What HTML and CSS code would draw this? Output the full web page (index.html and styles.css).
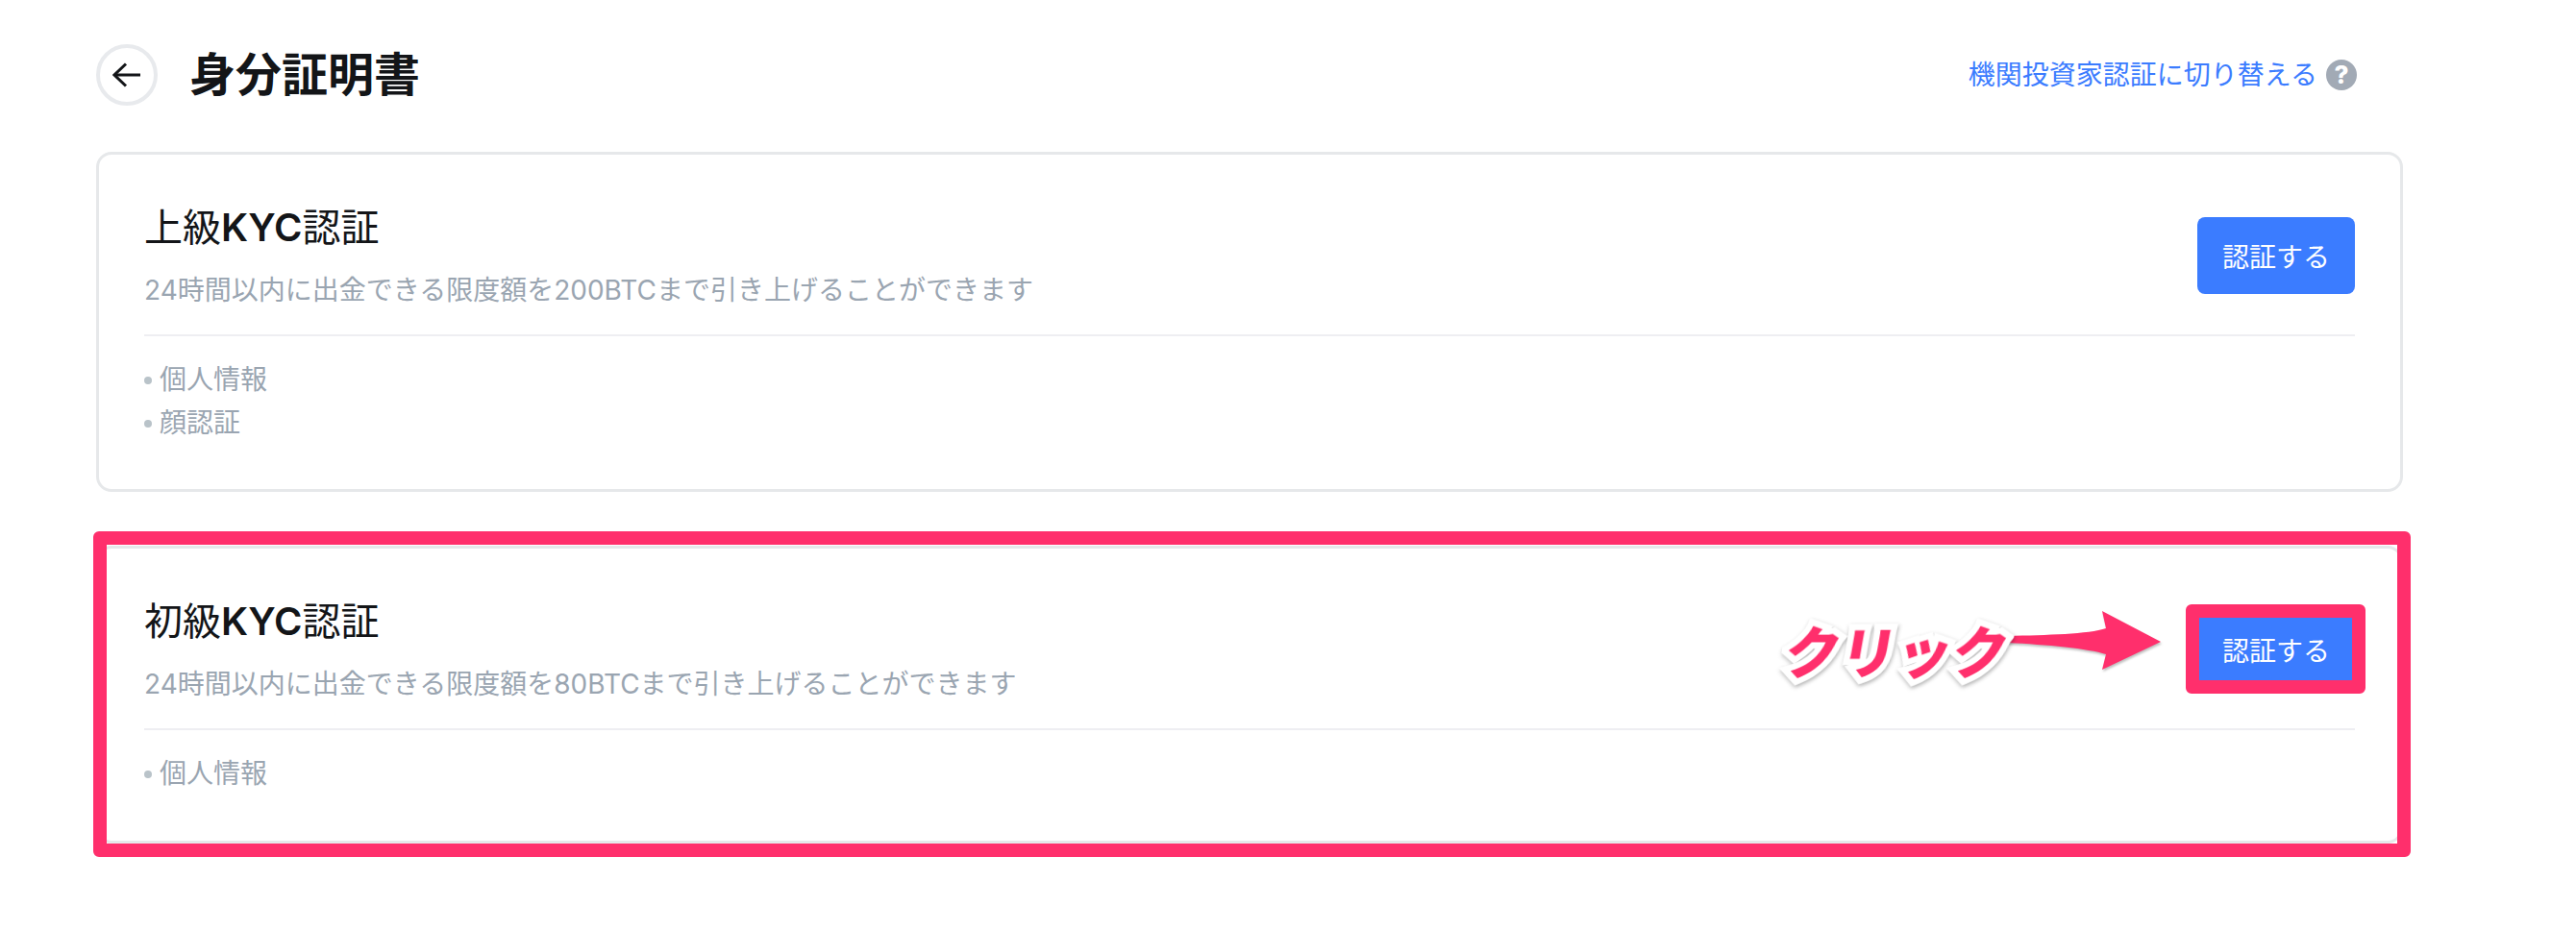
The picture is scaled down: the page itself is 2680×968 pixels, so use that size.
FILE: index.html
```html
<!DOCTYPE html>
<html lang="ja">
<head>
    <meta charset="UTF-8">
    <title>身分証明書</title>
    <link rel="stylesheet" href="styles.css">
</head>
<body>
    <div class="page">
        <header class="header">
            <div class="header-left">
                <button class="back-btn">
                    <svg width="30" height="26" viewBox="0 0 30 26" fill="none" stroke="#131518" stroke-width="3">
                        <path d="M29 13H2"/>
                        <path d="M14 1.5 2 13l12 11.5"/>
                    </svg>
                </button>
                <h1>身分証明書</h1>
            </div>
            <div class="switch">
                <a class="switch-link">機関投資家認証に切り替える</a>
                <span class="help">?</span>
            </div>
        </header>

        <section class="card">
            <div class="card-head">
                <div>
                    <h2>上級<b>KYC</b>認証</h2>
                    <p class="sub">24時間以内に出金できる限度額を200BTCまで引き上げることができます</p>
                </div>
                <button class="btn">認証する</button>
            </div>
            <ul class="req">
                <li>個人情報</li>
                <li>顔認証</li>
            </ul>
        </section>

        <section class="card">
            <div class="card-head">
                <div>
                    <h2>初級<b>KYC</b>認証</h2>
                    <p class="sub">24時間以内に出金できる限度額を80BTCまで引き上げることができます</p>
                </div>
                <button class="btn">認証する</button>
            </div>
            <ul class="req">
                <li>個人情報</li>
            </ul>
        </section>

        <!-- annotation layer -->
        <div class="mark-card"></div>
        <div class="mark-btn"></div>
        <svg class="click-arrow" width="170" height="70" viewBox="0 0 170 70">
            <path d="M0 28C40 27 84 26 102 20L98 2 159 34 98 63 102 47C84 41 40 37 0 35Z" fill="#ff2f6c"/>
        </svg>
        <div class="click-label">クリック</div>
    </div>
</body>
</html>
```

FILE: styles.css
```css
* {
    box-sizing: border-box;
}
body {
    margin: 0;
    background: #fff;
    font-family: Inter, "Noto Sans CJK JP", sans-serif;
    color: #131518;
}
.page {
    position: relative;
    width: 2680px;
    height: 968px;
    padding: 46px 180px 0 100px;
}
.header {
    display: flex;
    justify-content: space-between;
    align-items: center;
    height: 64px;
    margin-bottom: 48px;
}
.header-left {
    display: flex;
    align-items: center;
    gap: 33px;
}
.back-btn {
    display: flex;
    align-items: center;
    justify-content: center;
    width: 64px;
    height: 64px;
    padding: 0;
    background: #fff;
    border: 4px solid #e8eaed;
    border-radius: 50%;
}
h1 {
    margin: 0;
    font-size: 48px;
    font-weight: 700;
    line-height: 64px;
}
.switch {
    display: flex;
    align-items: center;
    gap: 9px;
    padding-right: 48px;
}
.switch-link {
    color: #3b7cff;
    font-size: 28px;
    line-height: 40px;
}
.help {
    width: 32px;
    height: 32px;
    border-radius: 50%;
    background: #a2aab5;
    color: #fff;
    font-size: 26px;
    font-weight: 800;
    line-height: 32px;
    text-align: center;
}
.card {
    padding: 48px 47px 46px;
    margin-bottom: 56px;
    background: #fff;
    border: 3px solid #e6e8ea;
    border-radius: 16px;
}
.card + .card {
    padding-bottom: 47px;
}
.card-head {
    display: flex;
    justify-content: space-between;
    align-items: center;
    padding-bottom: 26px;
    border-bottom: 2px solid #eeeef2;
}
h2 {
    margin: 0 0 17px;
    font-size: 40px;
    font-weight: 400;
    line-height: 56px;
}
h2 b {
    font-weight: 600;
}
.sub {
    margin: 0;
    color: #9aa5b1;
    font-size: 28px;
    line-height: 40px;
}
.btn {
    width: 164px;
    height: 80px;
    padding: 0;
    background: #3b7cff;
    border: none;
    border-radius: 8px;
    color: #fff;
    font-family: inherit;
    font-size: 28px;
}
.req {
    margin: 23px 0 0;
    padding: 0;
    list-style: none;
    color: #9aa5b1;
    font-size: 28px;
    line-height: 45px;
}
.req li {
    display: flex;
    align-items: center;
    gap: 8px;
}
.req li::before {
    content: "";
    width: 8px;
    height: 8px;
    border-radius: 50%;
    background: #b9c3c9;
}
.mark-card {
    position: absolute;
    left: 97px;
    top: 553px;
    width: 2411px;
    height: 339px;
    border: 14px solid #ff2f6c;
    border-radius: 6px;
}
.mark-btn {
    position: absolute;
    left: 2274px;
    top: 629px;
    width: 187px;
    height: 93px;
    border: 14px solid #ff2f6c;
    border-radius: 6px;
}
.click-label {
    position: absolute;
    left: 1858px;
    top: 636px;
    color: #ff2f6c;
    font-family: "Noto Sans CJK JP", sans-serif;
    font-size: 58px;
    font-weight: 900;
    line-height: 80px;
    transform: skewX(-10deg);
    -webkit-text-stroke: 13px #fff;
    paint-order: stroke fill;
    stroke-linejoin: round;
    filter: drop-shadow(1px 2px 2px rgba(0,0,0,0.3));
}
.click-arrow {
    position: absolute;
    left: 2089px;
    top: 634px;
    filter: drop-shadow(1px 2px 1px rgba(0,0,0,0.25));
}
```
